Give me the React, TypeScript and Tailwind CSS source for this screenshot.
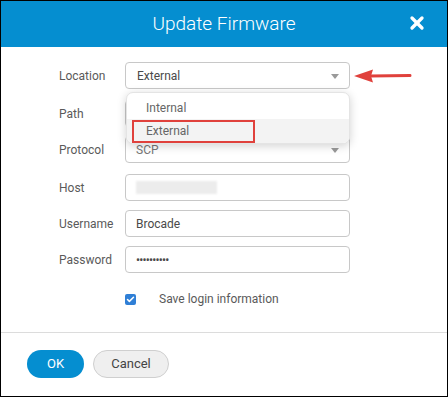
import { Check, X } from "lucide-react";

const font = { fontFamily: "Roboto, 'Liberation Sans', sans-serif" };

const Caret = () => (
  <svg width="8" height="5" viewBox="0 0 8 5" className="absolute right-[11px] top-[12px]">
    <path d="M0 0 L8 0 L4 5 Z" fill="#9a9a9a" />
  </svg>
);

const Row = ({ label, className, children }: { label: string; className?: string; children: React.ReactNode }) => (
  <div className={`flex items-center h-[27px] ${className ?? ""}`}>
    <div className="w-[66px] text-[12px] text-[#5a5a5a]">{label}</div>
    <div className="relative w-[225px] h-full">{children}</div>
  </div>
);

const inputCls =
  "w-full h-full rounded-[4px] border border-[#c8c8c8] bg-white px-[10px] flex items-center text-[12px] text-[#4a4a4a]";

export default function App() {
  return (
    <div
      style={font}
      className="w-[448px] h-[397px] border border-black bg-white flex flex-col overflow-hidden"
    >
      {/* Header */}
      <div className="relative h-[46px] bg-[#058ed0] flex items-center justify-center shrink-0">
        <span className="text-white text-[19px] font-light">Update Firmware</span>
        <X className="absolute right-[20px] top-[12px] text-white" size={20} strokeWidth={4} />
      </div>

      {/* Form */}
      <div className="relative h-[285px] pl-[58px] pt-[15px] shrink-0">
        <Row label="Location">
          <div className={`${inputCls} border-[#8a8a8a] pl-[11px]`}>External</div>
          <Caret />
        </Row>
        <Row label="Path" className="mt-[11px]">
          <div className={inputCls} />
        </Row>
        <Row label="Protocol" className="mt-[9px]">
          <div className={`${inputCls} text-[#777]`}>SCP</div>
          <Caret />
        </Row>
        <Row label="Host" className="mt-[11px]">
          <div className={inputCls}>
            <div className="w-[81px] h-[13px] bg-[#ececec] blur-[1px]" />
          </div>
        </Row>
        <Row label="Username" className="mt-[9px]">
          <div className={inputCls}>Brocade</div>
        </Row>
        <Row label="Password" className="mt-[9px]">
          <div className={`${inputCls} tracking-[-0.8px] text-[11px]`}>••••••••••</div>
        </Row>
        <div className="flex items-center ml-[66px] mt-[17px]">
          <div className="w-[11px] h-[11px] rounded-[2px] bg-[#2f7fd6] flex items-center justify-center">
            <Check size={9} strokeWidth={4} className="text-white" />
          </div>
          <span className="ml-[23px] text-[12px] text-[#5a5a5a]">Save login information</span>
        </div>

        {/* Dropdown menu */}
        <div className="absolute left-[125px] top-[45px] w-[224px] h-[52px] bg-white rounded-[7px] border border-[#e4e4e4] shadow-[0_2px_10px_rgba(0,0,0,0.18)] flex flex-col pt-[4px] text-[12px] text-[#666]">
          <div className="h-[22px] flex items-center pl-[19px]">Internal</div>
          <div className="h-[24px] flex items-center bg-[#f3f3f3] pl-[5px] rounded-b-[6px]">
            <div className="w-[123px] h-[23px] border-2 border-[#e0413c] flex items-center pl-[12px]">External</div>
          </div>
        </div>

        {/* Red arrow */}
        <svg width="60" height="16" viewBox="0 0 60 16" className="absolute left-[351px] top-[21px]">
          <path d="M18 8 L58 7.5" stroke="#e0413c" strokeWidth="3" strokeLinecap="round" />
          <path d="M2 8 L21 1.5 L19 8 L21 14.5 Z" fill="#e0413c" />
        </svg>
      </div>

      {/* Footer */}
      <div className="border-t border-[#dcdcdc] flex-1 flex items-center gap-[9px] pl-[26px] pb-[2px]">
        <button className="w-[57px] h-[28px] rounded-full bg-[#058ed0] text-white text-[13px]">OK</button>
        <button className="w-[76px] h-[28px] rounded-full bg-[#efefef] border border-[#cfcfcf] text-[#444] text-[13px]">
          Cancel
        </button>
      </div>
    </div>
  );
}
